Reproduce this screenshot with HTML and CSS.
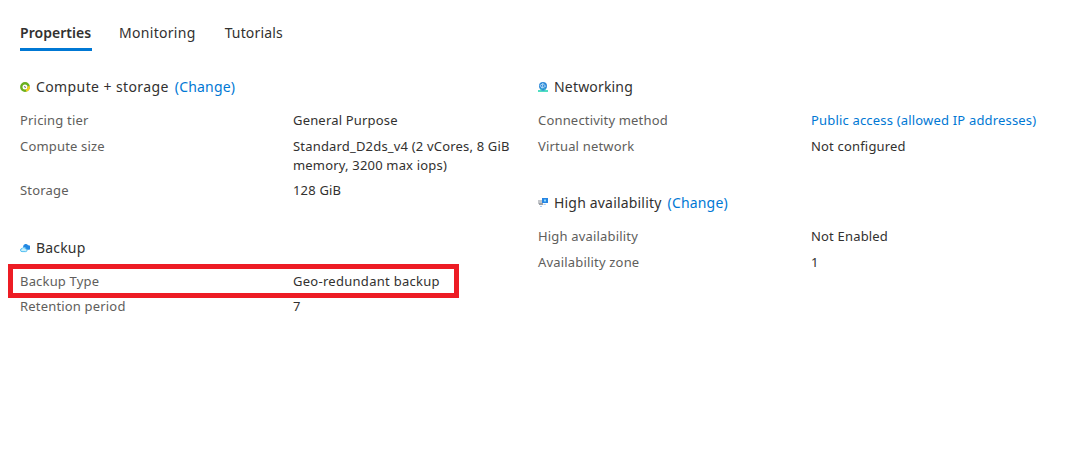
FILE: index.html
```
<!DOCTYPE html>
<html lang="en">
<head>
<meta charset="utf-8">
<title>Properties</title>
<link rel="stylesheet" href="styles.css">
</head>
<body>
<nav class="tabs">
  <a class="tab active">Properties</a>
  <a class="tab">Monitoring</a>
  <a class="tab tutorials">Tutorials</a>
</nav>
<main class="columns">
  <div class="column">
    <section class="group">
      <h2 class="title">
        <svg class="icon" viewBox="0 0 10 10"><circle cx="5" cy="5" r="3.7" fill="#fff" stroke="#6bb01f" stroke-width="2.4"/><path d="M8.7 4.2A3.7 3.7 0 0 1 6 8.6" fill="none" stroke="#f2cf1d" stroke-width="2.4"/><path d="M4.3 4.3l1.4 1.4" stroke="#666" stroke-width="1.2"/></svg>
        <span class="compute">Compute + storage</span><a class="link change">(Change)</a>
      </h2>
      <dl class="rows">
        <dt>Pricing tier</dt><dd>General Purpose</dd>
        <dt>Compute size</dt><dd>Standard_D2ds_v4 (2 vCores, 8 GiB<br>memory, 3200 max iops)</dd>
        <dt>Storage</dt><dd>128 GiB</dd>
      </dl>
    </section>
    <section class="group backup">
      <h2 class="title">
        <svg class="icon" viewBox="0 0 10 10"><path d="M3.2 3A2.6 2.6 0 0 1 8 2.2a2.3 2.3 0 0 1 .4 4.6H6.8L5.2 4.4 3.2 4z" fill="#2388e2"/><path d="M2 8.6a1.5 1.5 0 0 1 0-3A2 2 0 0 1 5.7 6a1.3 1.3 0 0 1 0 2.6z" fill="#c8effc" stroke="#42b8ef" stroke-width=".9"/></svg>
        <span>Backup</span>
      </h2>
      <dl class="rows">
        <dt>Backup Type</dt><dd class="wide">Geo-redundant backup</dd>
        <dt>Retention period</dt><dd>7</dd>
      </dl>
      <div class="highlight"></div>
    </section>
  </div>
  <div class="column">
    <section class="group">
      <h2 class="title">
        <svg class="icon" viewBox="0 0 10 10"><circle cx="5" cy="4" r="4" fill="#2f8ad8"/><path d="M2 3.5l3-2 2.6 2.8L4 6zM5 1.5L4 6" fill="none" stroke="#c5e6fb" stroke-width=".8"/><path d="M0 8h1.8l1-1.3h4.4l1 1.3H10v2H0z" fill="#50dec2"/><path d="M3.4 7h3.2v1.6H3.4z" fill="#2f8ad8"/></svg>
        <span>Networking</span>
      </h2>
      <dl class="rows">
        <dt>Connectivity method</dt><dd><a class="link">Public access (allowed IP addresses)</a></dd>
        <dt>Virtual network</dt><dd>Not configured</dd>
      </dl>
    </section>
    <section class="group availability">
      <h2 class="title">
        <svg class="icon" viewBox="0 0 10 10"><path d="M0 2h4v4H0z" fill="#c4c7cb"/><path d="M1 5h4v2H1z" fill="#9b9fa4"/><path d="M4 0h6v5H4z" fill="#2685e3"/><path d="M6 1.4h2v2H6z" fill="#8bdcff"/><path d="M5.4 6.4h2.4M2 8.4h2" stroke="#9ac8fa"/></svg>
        <span>High availability</span><a class="link change">(Change)</a>
      </h2>
      <dl class="rows">
        <dt>High availability</dt><dd>Not Enabled</dd>
        <dt>Availability zone</dt><dd>1</dd>
      </dl>
    </section>
  </div>
</main>
</body>
</html>
```
FILE: styles.css
```
* { box-sizing: border-box; }
body {
  margin: 0;
  padding: 22px 20px 0;
  background: #fff;
  color: #323130;
  font: 13px/19px "Noto Sans", "Open Sans", sans-serif;
  letter-spacing: .18px;
}
.tabs { display: flex; gap: 27px; height: 29px; }
.tab { height: 29px; line-height: 22px; font-size: 14px; letter-spacing: .3px; }
.tab.active { width: 72px; font-weight: 600; letter-spacing: .05px; border-bottom: 3px solid #0078d4; }
.tab.tutorials { margin-left: 2px; letter-spacing: .15px; }
.columns { display: grid; grid-template-columns: 518px 1fr; margin-top: 25px; }
.title {
  display: flex;
  align-items: center;
  height: 22px;
  margin: 0 0 13px;
  font-size: 14px;
  font-weight: 400;
  line-height: 22px;
}
.compute { letter-spacing: .4px; }
.icon { width: 10px; height: 10px; margin-right: 6px; }
.change { margin-left: 6px; }
.link { color: #0078d4; }
.rows {
  display: grid;
  grid-template-columns: 273px 1fr;
  row-gap: 7px;
  margin: 0;
}
.column:first-child .rows { row-gap: 6.5px; }
dt { color: #605e5c; }
dd { margin: 0; white-space: nowrap; }
.wide { letter-spacing: .28px; }
.backup { position: relative; margin-top: 37px; }
.column .backup .rows { row-gap: 6px; }
.availability { margin-top: 36px; }
.highlight {
  position: absolute;
  left: -12px;
  top: 27px;
  width: 451px;
  height: 34px;
  border: 5px solid #ed1c24;
}
```
